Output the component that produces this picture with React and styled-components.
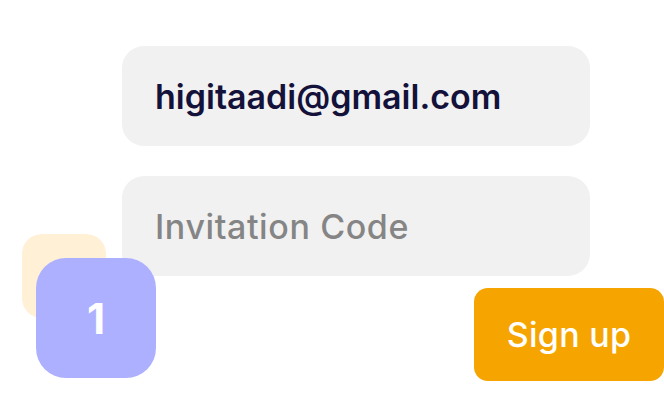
import styled, { createGlobalStyle } from "styled-components";

const GlobalStyle = createGlobalStyle`
    html, body {
        margin: 0;
        padding: 0;
        background: #ffffff;
    }
    body {
        font-family: "Inter", "Liberation Sans", sans-serif;
    }
`;

const Page = styled.main`
    position: relative;
    width: 664px;
    height: 400px;
    overflow: hidden;
    background: #ffffff;
    padding: 46px 0 0 122px;
    box-sizing: border-box;
`;

const Form = styled.form`
    display: flex;
    flex-direction: column;
    gap: 30px;
    width: 468px;
`;

const Field = styled.div`
    display: flex;
    align-items: center;
    height: 100px;
    padding: 0 33px;
    box-sizing: border-box;
    border-radius: 22px;
    background: #f1f1f1;
    font-size: 34px;
    font-weight: ${({ $filled }) => ($filled ? 600 : 500)};
    letter-spacing: ${({ $filled }) => ($filled ? "0" : "0.6px")};
    color: ${({ $filled }) => ($filled ? "#14123a" : "#858585")};
`;

const Actions = styled.div`
    display: flex;
    justify-content: flex-end;
    margin-top: 12px;
`;

const SignUp = styled.button`
    width: 190px;
    height: 93px;
    border: none;
    border-radius: 14px;
    background: #f6a500;
    color: #ffffff;
    font-family: inherit;
    font-size: 34px;
    font-weight: 500;
    letter-spacing: 0.3px;
    cursor: pointer;
`;

const Badge = styled.div`
    position: absolute;
    left: ${({ $left }) => $left}px;
    top: ${({ $top }) => $top}px;
    width: ${({ $size }) => $size}px;
    height: ${({ $size }) => $size}px;
    border-radius: ${({ $radius }) => $radius}px;
    background: ${({ $bg }) => $bg};
    display: flex;
    align-items: center;
    justify-content: center;
    color: #ffffff;
    font-size: 42px;
    font-weight: 700;
`;

export default function App() {
    return (
        <>
            <GlobalStyle />
            <Page>
                <Form>
                    <Field $filled>higitaadi@gmail.com</Field>
                    <Field>Invitation Code</Field>
                </Form>
                <Actions>
                    <SignUp type="button">Sign up</SignUp>
                </Actions>
                <Badge $left={22} $top={234} $size={84} $radius={20} $bg="#fff0d6" />
                <Badge $left={36} $top={258} $size={120} $radius={30} $bg="#adb0ff">
                    1
                </Badge>
            </Page>
        </>
    );
}
